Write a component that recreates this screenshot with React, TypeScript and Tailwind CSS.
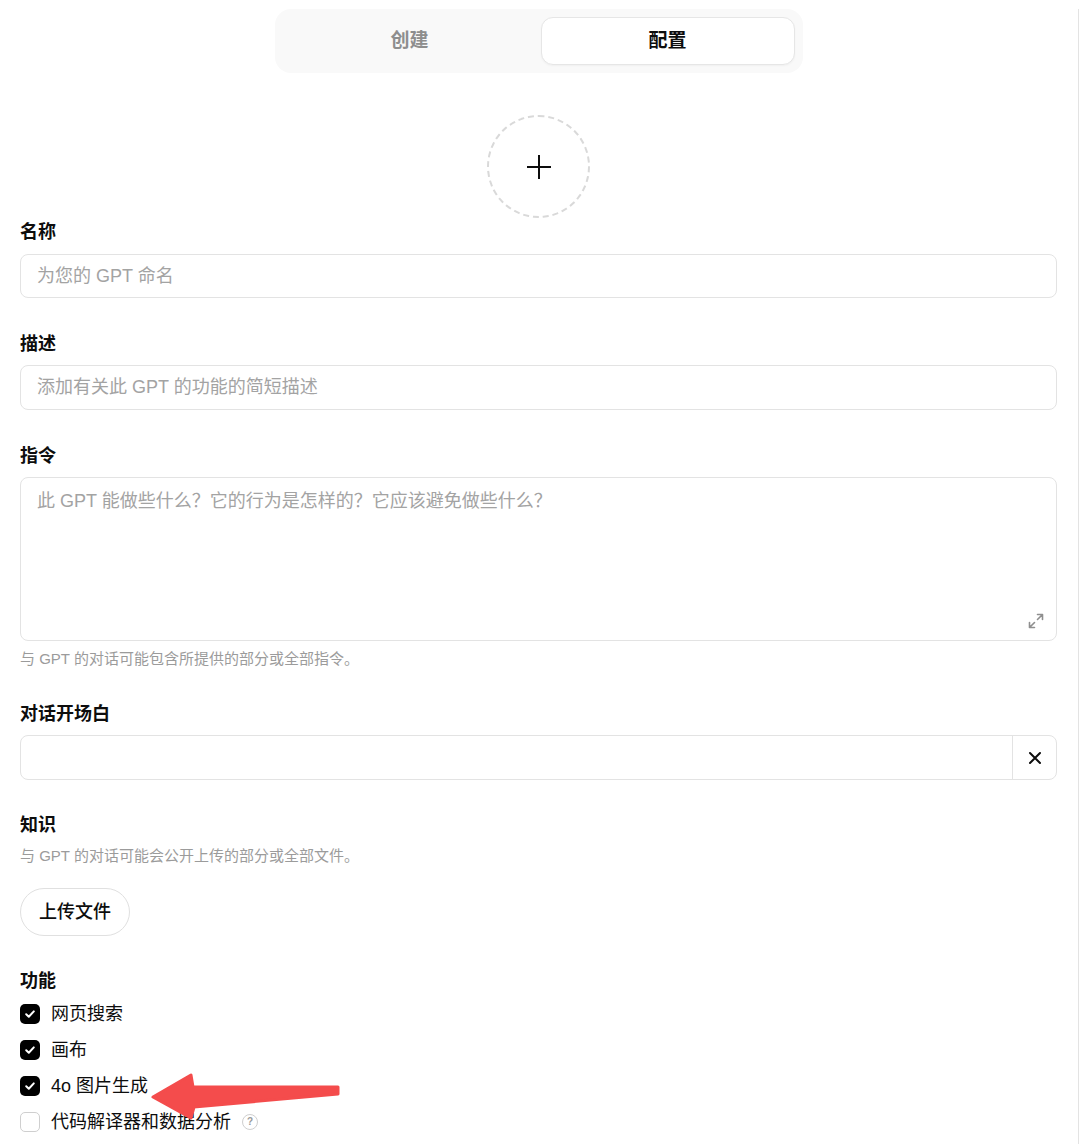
import { useState } from "react";

const font = { fontFamily: '"Liberation Sans", "Noto Sans CJK SC", sans-serif' };

function Label({ children, className = "" }: { children: React.ReactNode; className?: string }) {
    return <div className={"text-[18px] font-semibold leading-6 text-[#0d0d0d] " + className}>{children}</div>;
}

function CheckRow({ label, checked, help }: { label: string; checked: boolean; help?: boolean }) {
    return (
        <div className="flex h-9 items-center">
            {checked ? (
                <span className="flex h-5 w-5 items-center justify-center rounded-[5px] bg-black">
                    <svg width="12" height="12" viewBox="0 0 12 12" fill="none">
                        <path d="M2.2 6.3 4.8 8.8 9.8 3.4" stroke="white" strokeWidth="2" strokeLinecap="round" strokeLinejoin="round" />
                    </svg>
                </span>
            ) : (
                <span className="h-5 w-5 rounded-[5px] border border-[#cfcfcf] bg-white" />
            )}
            <span className="ml-[11px] text-[18px] leading-6 text-[#0d0d0d]">{label}</span>
            {help && (
                <span className="ml-[11px] flex h-4 w-4 items-center justify-center rounded-full border border-[#cfcfcf] text-[10px] font-semibold leading-none text-[#9a9a9a]">
                    ?
                </span>
            )}
        </div>
    );
}

export default function App() {
    const [tab] = useState("config");
    return (
        <div style={font} className="relative min-h-[1144px] w-[1079px] border-r border-[#e3e3e3] bg-white pl-5 pr-[21px]">
            {/* tabs */}
            <div className="mx-auto mt-[9px] grid h-[64px] w-[528px] grid-cols-2 gap-1 rounded-2xl bg-[#f9f9f9] p-2">
                <button className={"rounded-xl text-[19px] font-semibold " + (tab === "create" ? "bg-white text-black" : "text-[#8e8e8e]")}>创建</button>
                <button className="rounded-xl border border-[#e6e6e6] bg-white text-[19px] font-semibold text-[#0d0d0d] shadow-[0_1px_2px_rgba(0,0,0,0.04)]">配置</button>
            </div>

            {/* avatar */}
            <div className="mx-auto mt-[42px] flex h-[103px] w-[103px] items-center justify-center rounded-full border-2 border-dashed border-[#d9d9d9]">
                <svg width="26" height="26" viewBox="0 0 26 26" fill="none">
                    <path d="M13 1v24M1 13h24" stroke="#0d0d0d" strokeWidth="2" />
                </svg>
            </div>

            <Label className="mt-[2px]">名称</Label>
            <input
                placeholder="为您的 GPT 命名"
                className="mt-[10px] block h-[44px] w-full rounded-lg border border-[#e3e3e3] px-4 text-[18px] outline-none placeholder:text-[#a3a3a3]"
            />

            <Label className="mt-[34px]">描述</Label>
            <input
                placeholder="添加有关此 GPT 的功能的简短描述"
                className="mt-[9px] block h-[45px] w-full rounded-lg border border-[#e3e3e3] px-4 text-[18px] outline-none placeholder:text-[#a3a3a3]"
            />

            <Label className="mt-[34px]">指令</Label>
            <div className="relative mt-[9px] h-[164px] w-full rounded-lg border border-[#e3e3e3]">
                <textarea
                    placeholder="此 GPT 能做些什么？它的行为是怎样的？它应该避免做些什么？"
                    className="h-full w-full resize-none rounded-lg px-4 pt-[11px] text-[18px] leading-6 outline-none placeholder:text-[#a3a3a3]"
                />
                <svg className="absolute bottom-[10px] right-[11px]" width="18" height="18" viewBox="0 0 18 18" fill="none">
                    <path d="M10.5 2.5h5v5M15.5 2.5l-5 5M7.5 15.5h-5v-5M2.5 15.5l5-5" stroke="#8f8f8f" strokeWidth="1.6" strokeLinecap="round" strokeLinejoin="round" />
                </svg>
            </div>
            <div className="mt-[8px] text-[15px] leading-5 text-[#9b9b9b]">与 GPT 的对话可能包含所提供的部分或全部指令。</div>

            <Label className="mt-[33px]">对话开场白</Label>
            <div className="mt-[9px] flex h-[45px] w-full rounded-lg border border-[#e3e3e3]">
                <input className="min-w-0 flex-1 rounded-l-lg px-4 text-[18px] outline-none" />
                <button className="flex w-[44px] items-center justify-center border-l border-[#e3e3e3]">
                    <svg width="14" height="14" viewBox="0 0 14 14" fill="none">
                        <path d="M2 2l10 10M12 2 2 12" stroke="#0d0d0d" strokeWidth="2" strokeLinecap="round" />
                    </svg>
                </button>
            </div>

            <Label className="mt-[33px]">知识</Label>
            <div className="mt-[9px] text-[15px] leading-5 text-[#9b9b9b]">与 GPT 的对话可能会公开上传的部分或全部文件。</div>
            <button className="mt-[22px] h-[48px] w-[110px] rounded-full border border-[#e0e0e0] text-[18px] font-medium text-[#0d0d0d]">上传文件</button>

            <Label className="mt-[33px]">功能</Label>
            <div className="mt-[3px]">
                <CheckRow label="网页搜索" checked />
                <CheckRow label="画布" checked />
                <CheckRow label="4o 图片生成" checked />
                <CheckRow label="代码解译器和数据分析" checked={false} help />
            </div>

            {/* annotation arrow */}
            <svg className="pointer-events-none absolute left-0 top-0" width="400" height="1144" viewBox="0 0 400 1144">
                <path
                    d="M153 1088 L191 1066 L193 1078 L338 1078 L338 1085 L194 1098 L191 1109 Z"
                    fill="#f44c4c"
                    stroke="#f44c4c"
                    strokeWidth="3"
                    strokeLinejoin="round"
                />
            </svg>
        </div>
    );
}
